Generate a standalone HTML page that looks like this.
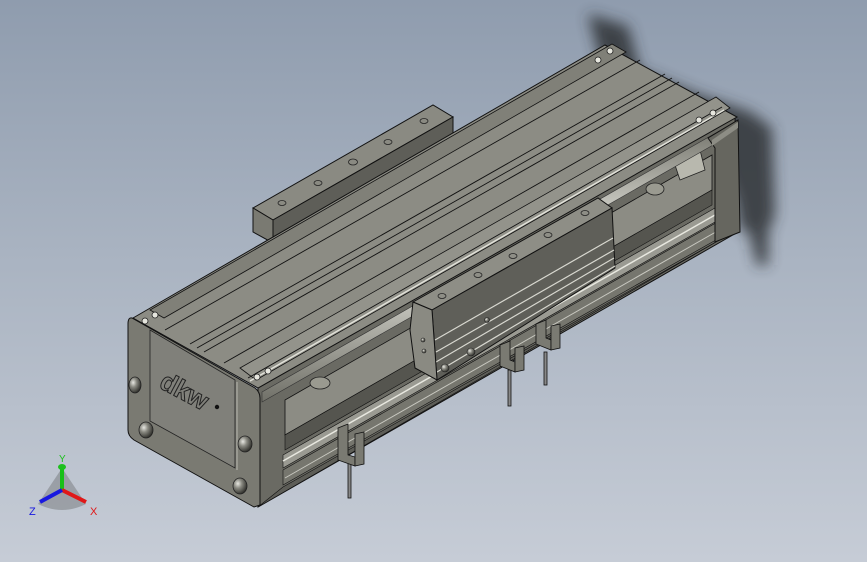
<!DOCTYPE html>
<html><head><meta charset="utf-8"><style>
html,body{margin:0;padding:0;width:867px;height:562px;overflow:hidden}
body{background:linear-gradient(180deg,#8f9cae 0%,#a9b3c1 45%,#c6ccd6 100%)}
svg{position:absolute;left:0;top:0}
</style></head><body>
<svg width="867" height="562" viewBox="0 0 867 562" xmlns="http://www.w3.org/2000/svg" font-family="Liberation Sans, sans-serif">
<defs>
<filter id="bl" x="-50%" y="-50%" width="200%" height="200%"><feGaussianBlur stdDeviation="7"/></filter>
<linearGradient id="rod" x1="0" y1="0" x2="0" y2="1"><stop offset="0" stop-color="#707068"/><stop offset=".45" stop-color="#f2f2ea"/><stop offset="1" stop-color="#707068"/></linearGradient>
<radialGradient id="hole" cx=".35" cy=".35" r=".7"><stop offset="0" stop-color="#e8e8e2"/><stop offset=".4" stop-color="#8a8a82"/><stop offset="1" stop-color="#2a2a26"/></radialGradient>
</defs>
<g filter="url(#bl)" fill="#2e3236" opacity=".85">
<path d="M588 14 L628 26 L640 70 L700 95 L745 110 L770 130 L772 200 L760 235 L740 230 L735 200 L700 120 L600 60 Z"/>
<path d="M748 110 L772 128 L775 215 L765 240 L752 250 L748 210 Z"/>
<path d="M752 225 L768 228 L768 265 L756 265 Z"/>
</g>
<polygon points="253,208 433,105 453,117 273,220" fill="#8a8a82" stroke="#111" stroke-width="1"/>
<polygon points="273,220 453,117 453,140 273,243" fill="#5e5e58" stroke="#111" stroke-width="1"/>
<polygon points="253,208 273,220 273,243 253,232" fill="#7a7a72" stroke="#111" stroke-width="1"/>
<g fill="none" stroke="#222" stroke-width=".8">
<ellipse cx="282" cy="203" rx="4" ry="2.5"/><ellipse cx="318" cy="183" rx="4" ry="2.5"/><ellipse cx="353" cy="162" rx="4.5" ry="3"/><ellipse cx="388" cy="142" rx="4" ry="2.5"/><ellipse cx="424" cy="121" rx="4" ry="2.5"/>
</g>
<polygon points="258,388 735,117 738,232 258,507" fill="#6a6a63" stroke="#111" stroke-width="1"/>
<polygon points="285,400 712,155 712,190 285,435" fill="#8c8c84" stroke="#111" stroke-width=".8"/>
<polygon points="285,435 712,190 712,205 285,450" fill="#55554f" stroke="#111" stroke-width=".6"/>
<polygon points="283,455 715,208 715,222 283,468" fill="#9a9a92" stroke="#111" stroke-width=".6"/>
<line x1="283" y1="461" x2="715" y2="215" stroke="#e8e8e0" stroke-width="1.5"/>
<polygon points="283,470 728,216 730,232 283,485" fill="#76766e" stroke="#111" stroke-width=".6"/>
<line x1="285" y1="478" x2="728" y2="225" stroke="#c8c8c0" stroke-width="1"/>
<polygon points="283,487 730,234 258,507" fill="#5d5d57" stroke="#111" stroke-width=".6"/>
<ellipse cx="320" cy="383" rx="10" ry="6" fill="#9a9a90" stroke="#222" stroke-width=".8"/>
<ellipse cx="655" cy="189" rx="9" ry="6" fill="#9a9a90" stroke="#222" stroke-width=".8"/>
<polygon points="675,165 700,150 705,170 680,180" fill="#b8b8ae" stroke="#222" stroke-width=".8"/>
<polygon points="262,392 735,122 736,132 262,402" fill="url(#rod)" stroke="#333" stroke-width=".6"/>
<polygon points="708,138 738,120 740,232 715,242 715,148" fill="#66665f" stroke="#111" stroke-width="1"/>
<polygon points="712,140 738,122 738,128 712,146" fill="#8d8d85"/>
<polygon points="133,318 605,45 737,117 258,388" fill="#8c8c84" stroke="#111" stroke-width="1"/>
<polygon points="150,310 612,44 626,52 164,318" fill="#808078" stroke="#111" stroke-width=".8"/>
<polygon points="240,368 716,97 730,108 256,380" fill="#93938b" stroke="#111" stroke-width=".8"/>
<g stroke="#111" stroke-width=".9">
<line x1="165" y1="330" x2="640" y2="60"/>
<line x1="190" y1="344" x2="665" y2="74"/>
<line x1="197" y1="348" x2="672" y2="78"/>
<line x1="204" y1="352" x2="679" y2="82"/>
<line x1="224" y1="363" x2="699" y2="92"/>
<line x1="248" y1="378" x2="722" y2="107"/>
</g>
<line x1="250" y1="381" x2="724" y2="110" stroke="#e2e2da" stroke-width="1.4"/>
<g fill="#e6e6de" stroke="#222" stroke-width=".8">
<circle cx="145" cy="321" r="3"/><circle cx="155" cy="315" r="3"/><circle cx="257" cy="377" r="3"/><circle cx="268" cy="371" r="3"/>
<circle cx="598" cy="60" r="3"/><circle cx="610" cy="51" r="3"/><circle cx="699" cy="120" r="3"/><circle cx="713" cy="113" r="3"/>
</g>
<path d="M132,318 L255,388 Q260,392 260,398 L260,505 L254,507 L134,440 Q128,436 128,430 L128,324 Q128,317 132,318 Z" fill="#7a7a72" stroke="#111" stroke-width="1"/>
<polygon points="150,330 235,380 235,468 150,421" fill="#80807a" stroke="#222" stroke-width=".8"/>
<line x1="237" y1="382" x2="237" y2="470" stroke="#b8b8b0" stroke-width="1"/>
<g fill="url(#hole)" stroke="#222" stroke-width=".8">
<ellipse cx="135" cy="385" rx="6" ry="8"/><ellipse cx="146" cy="430" rx="7" ry="8"/><ellipse cx="245" cy="444" rx="7" ry="8"/><ellipse cx="240" cy="486" rx="7" ry="8"/>
</g>
<text x="158" y="393" font-size="26" font-weight="bold" fill="none" stroke="#222" stroke-width="1" transform="rotate(28 170 390)">dkw</text>
<circle cx="217" cy="407" r="2.2" fill="#111"/>
<polygon points="413,302 598,198 612,208 432,310" fill="#8e8e86" stroke="#111" stroke-width="1"/>
<polygon points="432,310 612,208 615,268 437,380" fill="#5f5f59" stroke="#111" stroke-width="1"/>
<g stroke="#d8d8d0" stroke-width="1.2"><line x1="435" y1="340" x2="613" y2="238"/><line x1="436" y1="352" x2="614" y2="250"/><line x1="436" y1="362" x2="614" y2="258"/><line x1="437" y1="372" x2="615" y2="266"/></g>
<polygon points="413,302 432,310 437,380 415,368 410,330" fill="#8a8a82" stroke="#111" stroke-width="1"/>
<g fill="none" stroke="#222" stroke-width=".8"><ellipse cx="442" cy="296" rx="4" ry="2.5"/><ellipse cx="478" cy="275" rx="4" ry="2.5"/><ellipse cx="513" cy="256" rx="4" ry="2.5"/><ellipse cx="548" cy="235" rx="4" ry="2.5"/><ellipse cx="585" cy="213" rx="4" ry="2.5"/></g>
<g fill="url(#hole)" stroke="#222" stroke-width=".6"><circle cx="445" cy="368" r="4"/><circle cx="471" cy="352" r="4"/><circle cx="487" cy="320" r="2.5"/><circle cx="423" cy="340" r="2"/><circle cx="424" cy="351" r="2"/></g>
<g fill="#7a7a72" stroke="#111" stroke-width=".8">
<rect x="348" y="462" width="3" height="36" fill="#888"/>
<polygon points="338,428 348,424 348,455 355,457 355,466 338,460"/>
<polygon points="355,434 364,432 364,464 355,466"/>
<rect x="508" y="370" width="3" height="36" fill="#888"/>
<polygon points="500,345 510,341 510,360 515,362 515,372 500,366"/>
<polygon points="515,348 524,346 524,370 515,372"/>
<rect x="544" y="352" width="3" height="33" fill="#888"/>
<polygon points="536,324 546,320 546,338 551,340 551,350 536,344"/>
<polygon points="551,326 560,324 560,348 551,350"/>
</g>
<g transform="translate(62,490)">
<path d="M0,-22 L24,14 Q0,26 -24,14 Z" fill="#555" opacity=".35"/>
<line x1="0" y1="0" x2="0" y2="-22" stroke="#18c018" stroke-width="4"/>
<ellipse cx="0" cy="-23" rx="4" ry="3" fill="#1ec01e"/>
<line x1="0" y1="0" x2="24" y2="12" stroke="#e01818" stroke-width="4"/>
<line x1="0" y1="0" x2="-22" y2="12" stroke="#1818e0" stroke-width="4"/>
<text x="-3" y="-28" font-size="10" fill="#1ec01e">Y</text>
<text x="28" y="25" font-size="11" fill="#e01818">X</text>
<text x="-33" y="25" font-size="11" fill="#1818e0">Z</text>
</g>
</svg>
</body></html>
